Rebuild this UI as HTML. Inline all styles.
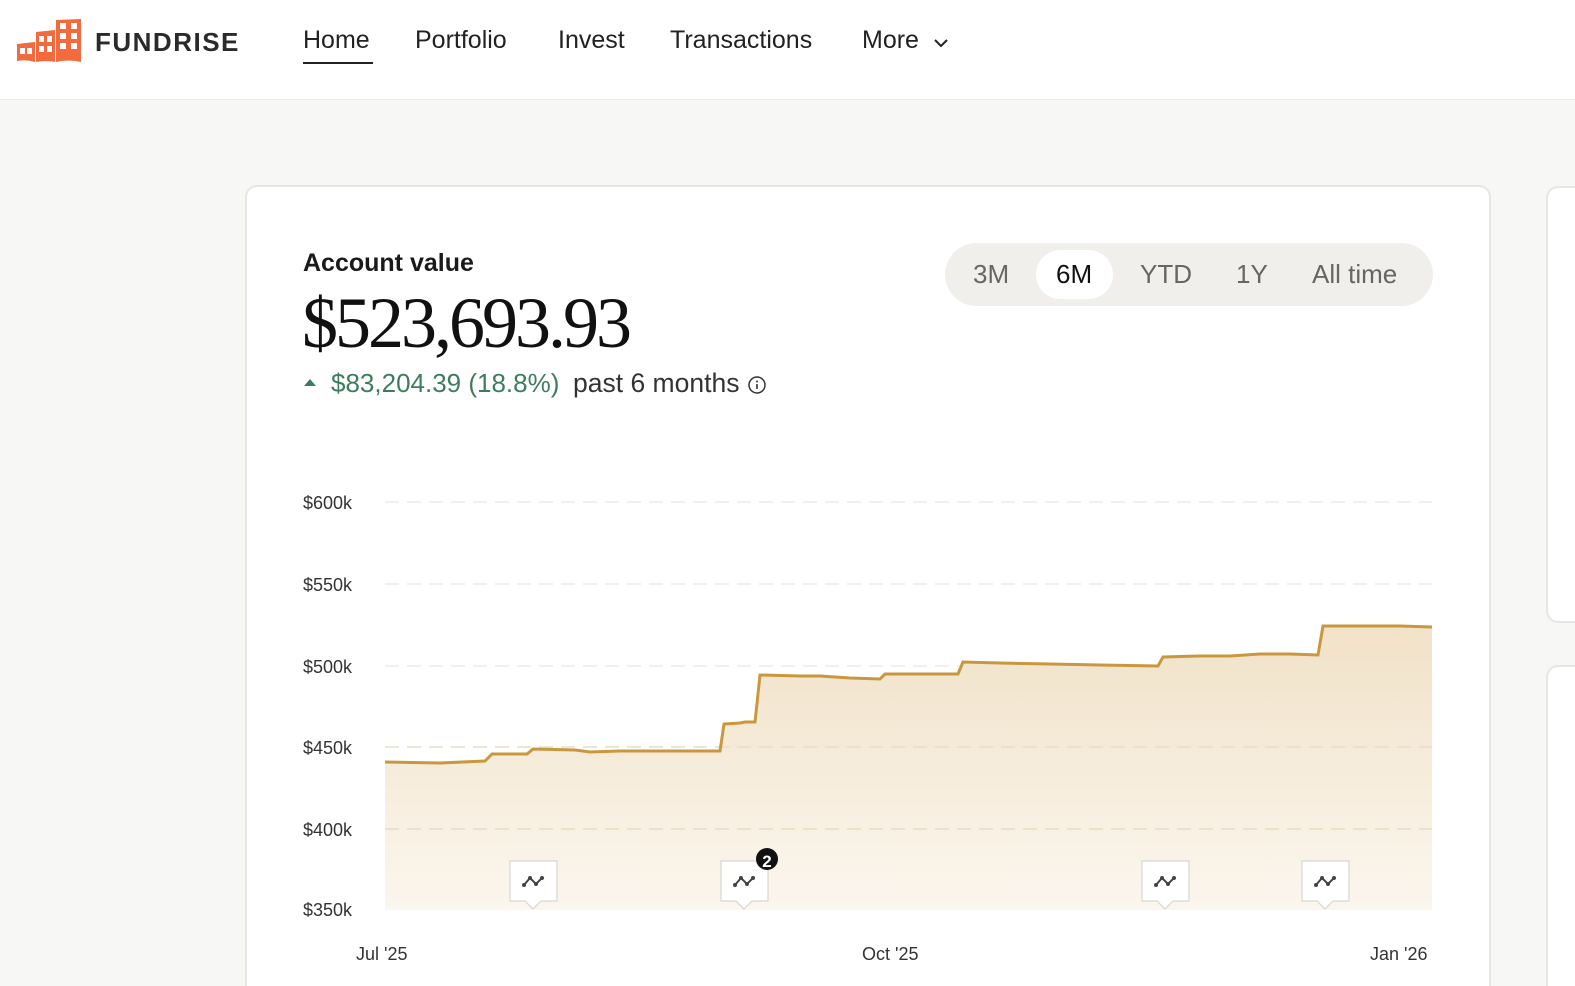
<!DOCTYPE html>
<html style="width:1575px;height:986px;overflow:hidden"><head><meta charset="utf-8">
<style>
*{margin:0;padding:0;box-sizing:border-box}
body{width:1575px;height:986px;overflow:hidden;background:#f7f7f5;font-family:"Liberation Sans",sans-serif;position:relative;color:#1a1a1a}
.hdr{position:absolute;left:0;top:0;width:1575px;height:100px;background:#fff;border-bottom:1px solid #ebebe8}
.nav{position:absolute;top:26px;font-size:25px;color:#222}
.card{position:absolute;background:#fff;border:2px solid #e6e6e3;border-radius:12px}
.open{border-bottom:none;border-radius:12px 12px 0 0}
.abs{position:absolute}
.ylab{position:absolute;left:303px;font-size:18px;color:#333}
.xlab{position:absolute;top:944px;font-size:18px;color:#333}
.tab{position:absolute;top:259px;font-size:26px;color:#666}
</style></head><body>
<div class="hdr">
<svg class="abs" style="left:16px;top:18px" width="68" height="46" viewBox="0 0 68 46">
<path d="M1 26 L19 24 L19 44 Q10 41 1 43Z" fill="#f26a3d"/>
<path d="M20 14 L39 12 L39 44 Q30 42 20 44Z" fill="#f26a3d"/>
<path d="M40 2 L65 1 L65 44 Q52 41 40 44Z" fill="#f26a3d"/>
<g fill="#fff">
<rect x="4" y="30" width="5" height="6"/><rect x="11" y="30" width="5" height="6"/>
<rect x="23" y="18" width="5" height="6"/><rect x="31" y="18" width="5" height="6"/><rect x="23" y="28" width="5" height="6"/><rect x="31" y="28" width="5" height="6"/>
<rect x="44" y="5" width="6" height="6"/><rect x="55" y="5" width="6" height="6"/><rect x="44" y="15" width="6" height="6"/><rect x="55" y="15" width="6" height="6"/><rect x="44" y="25" width="6" height="6"/><rect x="55" y="25" width="6" height="6"/>
</g></svg>
<div class="abs" style="left:95px;top:27px;font-size:26px;font-weight:bold;letter-spacing:1.5px;color:#2a2a2a">FUNDRISE</div>
<div class="nav" style="left:303px">Home</div>
<div class="abs" style="left:303px;top:62px;width:70px;height:2px;background:#222"></div>
<div class="nav" style="left:415px">Portfolio</div>
<div class="nav" style="left:558px">Invest</div>
<div class="nav" style="left:670px">Transactions</div>
<div class="nav" style="left:862px">More</div>
<svg class="abs" style="left:933px;top:37px" width="16" height="12"><path d="M2 3 L8 9 L14 3" fill="none" stroke="#222" stroke-width="2"/></svg>
</div>

<div class="card open" style="left:245px;top:185px;width:1246px;height:801px"></div>
<div class="card" style="left:1546px;top:186px;width:29px;height:437px;border-right:none;border-radius:12px 0 0 12px"></div>
<div class="card open" style="left:1546px;top:665px;width:29px;height:321px;border-right:none;border-radius:12px 0 0 0"></div>

<div class="abs" style="left:303px;top:249px;font-size:25px;font-weight:bold;color:#1a1a1a">Account value</div>
<div class="abs" style="left:302px;top:282px;font-family:'Liberation Serif',serif;font-size:72px;letter-spacing:-3px;color:#111">$523,693.93</div>
<svg class="abs" style="left:303px;top:378px" width="14" height="10"><path d="M1 8 L7 1 L13 8Z" fill="#3e7d5c"/></svg>
<div class="abs" style="left:331px;top:368px;font-size:26px;color:#3e7d5c">$83,204.39 (18.8%)</div>
<div class="abs" style="left:573px;top:368px;font-size:26.5px;color:#333">past 6 months</div>
<svg class="abs" style="left:747px;top:375px" width="20" height="20"><circle cx="10" cy="10" r="8" fill="none" stroke="#333" stroke-width="1.5"/><rect x="9.2" y="9" width="1.6" height="5" fill="#333"/><circle cx="10" cy="6.5" r="1" fill="#333"/></svg>

<div class="abs" style="left:945px;top:243px;width:488px;height:63px;background:#f0efeb;border-radius:32px"></div>
<div class="abs" style="left:1036px;top:250px;width:77px;height:49px;background:#fff;border-radius:25px"></div>
<div class="tab" style="left:973px">3M</div>
<div class="tab" style="left:1056px;color:#111">6M</div>
<div class="tab" style="left:1140px">YTD</div>
<div class="tab" style="left:1236px">1Y</div>
<div class="tab" style="left:1312px">All time</div>

<div class="ylab" style="top:493px">$600k</div>
<div class="ylab" style="top:575px">$550k</div>
<div class="ylab" style="top:657px">$500k</div>
<div class="ylab" style="top:738px">$450k</div>
<div class="ylab" style="top:820px">$400k</div>
<div class="ylab" style="top:900px">$350k</div>
<div class="xlab" style="left:356px">Jul '25</div>
<div class="xlab" style="left:862px">Oct '25</div>
<div class="xlab" style="left:1370px">Jan '26</div>

<svg class="abs" style="left:0;top:0" width="1575" height="986">
<defs><linearGradient id="g" x1="0" y1="0" x2="0" y2="1"><stop offset="0" stop-color="#f1e2c8"/><stop offset="1" stop-color="#fbf6ee"/></linearGradient></defs>
<g stroke="#ebebe8" stroke-width="1.5" stroke-dasharray="14 8">
<line x1="385" y1="502" x2="1432" y2="502"/><line x1="385" y1="584" x2="1432" y2="584"/><line x1="385" y1="666" x2="1432" y2="666"/>
</g>
<path d="M385 762 L440 763 L485 761 L492 754 L527 754 L533 749 L575 750 L590 752 L620 751 L690 751 L720 751 L724 724 L740 723 L745 722 L755 722 L760 675 L800 676 L820 676 L850 678 L880 679 L885 674 L920 674 L958 674 L963 662 L1000 663 L1050 664 L1100 665 L1158 666 L1163 657 L1200 656 L1230 656 L1260 654 L1290 654 L1318 655 L1323 626 L1360 626 L1400 626 L1432 627 L1432 910 L385 910Z" fill="url(#g)"/>
<g stroke="#e9dcc5" stroke-width="1.5" stroke-dasharray="14 8">
<line x1="385" y1="747" x2="1432" y2="747"/><line x1="385" y1="829" x2="1432" y2="829"/>
</g>
<path d="M385 762 L440 763 L485 761 L492 754 L527 754 L533 749 L575 750 L590 752 L620 751 L690 751 L720 751 L724 724 L740 723 L745 722 L755 722 L760 675 L800 676 L820 676 L850 678 L880 679 L885 674 L920 674 L958 674 L963 662 L1000 663 L1050 664 L1100 665 L1158 666 L1163 657 L1200 656 L1230 656 L1260 654 L1290 654 L1318 655 L1323 626 L1360 626 L1400 626 L1432 627" fill="none" stroke="#c9973e" stroke-width="3"/>
<g id="m">
<path d="M510 861 H557 V901 H541 L533 909 L525 901 H510Z" fill="#fff" stroke="#d6d6d3" stroke-width="1.2"/>
<path d="M524 885 L530 878 L536 884 L542 878" fill="none" stroke="#444" stroke-width="2"/>
<circle cx="524" cy="885" r="2" fill="#444"/><circle cx="530" cy="878" r="2" fill="#444"/><circle cx="536" cy="884" r="2" fill="#444"/><circle cx="542" cy="878" r="2" fill="#444"/>
</g>
<use href="#m" x="211"/><use href="#m" x="632"/><use href="#m" x="792"/>
<circle cx="767" cy="859" r="11" fill="#111"/>
<text x="767" y="867" font-family="Liberation Sans" font-size="17" font-weight="bold" fill="#fff" text-anchor="middle">2</text>
</svg>
</body></html>
